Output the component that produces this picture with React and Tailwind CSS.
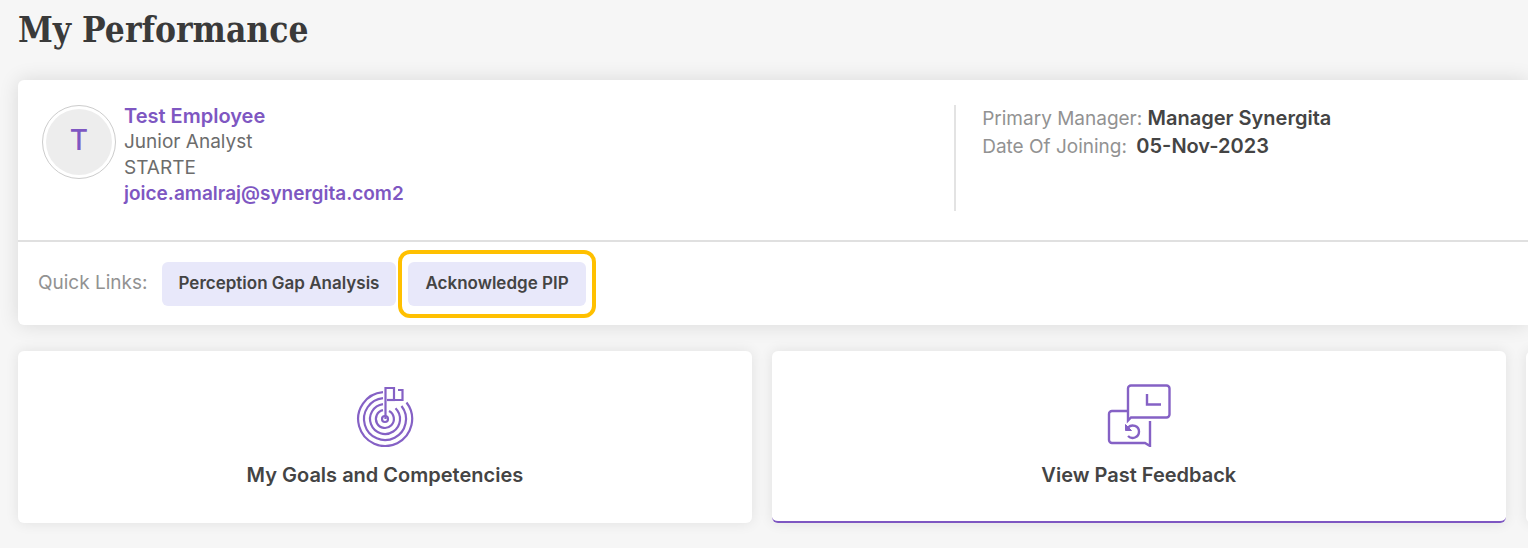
const employee = {
  name: "Test Employee",
  title: "Junior Analyst",
  department: "STARTE",
  email: "joice.amalraj@synergita.com2",
  manager: "Manager Synergita",
  joiningDate: "05-Nov-2023",
};

function GoalsIcon() {
  return (
    <svg
      className="w-15 h-16"
      viewBox="0 0 60 64"
      fill="none"
      stroke="#8561c5"
      strokeWidth="2.2"
      aria-hidden="true"
    >
      <path d="M28 9.1A27 27 0 1 0 51.5 19.5" />
      <path d="M28 15.1A21 21 0 1 0 46.5 23" />
      <path d="M28 21.1A15 15 0 1 0 40.5 25.2" />
      <path d="M28 27.2A9 9 0 1 0 34 28" />
      <circle cx="30" cy="36" r="3" />
      <path d="M30.5 36V5h8.5v12h8.5V7H43" />
      <path d="M32 17h8" />
    </svg>
  );
}

function FeedbackIcon() {
  return (
    <svg
      className="w-16 h-16"
      viewBox="0 0 64 64"
      fill="none"
      stroke="#8561c5"
      strokeWidth="2.4"
      aria-hidden="true"
    >
      <path d="M21 5.5a3 3 0 0 1 3-3h35.5a3 3 0 0 1 3 3v26a3 3 0 0 1-3 3H24l-3 3Z" />
      <path d="M40 11v10.5h14" />
      <path d="M21 28H5a3 3 0 0 0-3 3v26a3 3 0 0 0 3 3h33l5 3V38" />
      <path d="M21 44.5c4-4 11-1.500 11 4 0 6-7 8.500-11 4.500" />
      <path d="M18.500 41.500v6h6Z" fill="#8561c5" strokeWidth="1" />
    </svg>
  );
}

function TileCard({ icon, label, active }) {
  return (
    <a
      href="#"
      className={`w-[48.6%] shrink-0 h-43 rounded-md bg-white shadow-[0_0_14px_rgba(0,0,0,0.09)] flex flex-col items-center pt-8 gap-3 border-b-2 ${
        active ? "border-[#7e57c2]" : "border-white"
      }`}
    >
      {icon}
      <span className="text-[20px] leading-8 font-semibold text-[#444444]">
        {label}
      </span>
    </a>
  );
}

export default function App() {
  return (
    <div className="min-h-screen overflow-hidden bg-[#f6f6f6] pl-[18px] pb-6 font-['Inter',sans-serif]">
      {/* HEADER */}
      <h1 className="pt-2 mb-7 text-[35px] leading-11 font-bold text-[#3a3a3a] font-['DejaVu_Serif_Condensed','DejaVu_Serif',serif]">
        My Performance
      </h1>

      {/* PROFILE */}
      <section className="rounded-l-md bg-white shadow-[0_0_20px_rgba(0,0,0,0.12)]">
        <div className="flex h-40 pt-[25px]">
          <div className="w-[62%] flex pl-6 gap-2">
            <div className="w-[74px] h-[74px] shrink-0 rounded-full border border-[#cccccc] bg-white p-[3px]">
              <div className="w-full h-full rounded-full bg-[#ededed] flex items-center justify-center text-[28px] leading-8 font-medium text-[#7e57c2] pb-1">
                T
              </div>
            </div>
            <div className="-mt-0.5 text-[19px] leading-[26px] text-[#6c6c6c]">
              <div className="text-[20px] leading-[26px] font-semibold text-[#7e57c2]">
                {employee.name}
              </div>
              <div>{employee.title}</div>
              <div>{employee.department}</div>
              <a href="#" className="block font-semibold text-[#7e57c2]">
                {employee.email}
              </a>
            </div>
          </div>

          <div className="h-[106px] border-l-2 border-[#e3e3e3] pl-[26px] text-[19px] leading-7 text-[#929292]">
            <div>
              Primary Manager:{" "}
              <span className="text-[20px] leading-none font-semibold text-[#444444]">
                {employee.manager}
              </span>
            </div>
            <div>
              Date Of Joining:{" "}
              <span className="ml-1 text-[20px] leading-none font-semibold text-[#444444]">
                {employee.joiningDate}
              </span>
            </div>
          </div>
        </div>

        {/* QUICK LINKS */}
        <div className="flex items-center h-[85px] border-t-2 border-[#e0e0e0] pl-5 text-[#444444]">
          <span className="mr-3.5 text-[19px] text-[#929292]">Quick Links:</span>
          <a
            href="#"
            className="mr-3 flex h-11 items-center rounded-md bg-[#e8e8fa] px-[17px] text-[17px] font-semibold"
          >
            Perception Gap Analysis
          </a>
          <a
            href="#"
            className="relative flex h-11 items-center rounded-md bg-[#e8e8fa] px-[17px] text-[17px] font-semibold"
          >
            Acknowledge PIP
            <span className="absolute -inset-x-2.5 -inset-y-3 rounded-xl border-4 border-[#ffc000]" />
          </a>
        </div>
      </section>

      {/* TILES */}
      <div className="mt-[26px] flex gap-5">
        <TileCard icon={<GoalsIcon />} label="My Goals and Competencies" />
        <TileCard icon={<FeedbackIcon />} label="View Past Feedback" active />
        <div className="w-[48.6%] shrink-0 rounded-md bg-white shadow-[0_0_14px_rgba(0,0,0,0.09)]" />
      </div>
    </div>
  );
}
